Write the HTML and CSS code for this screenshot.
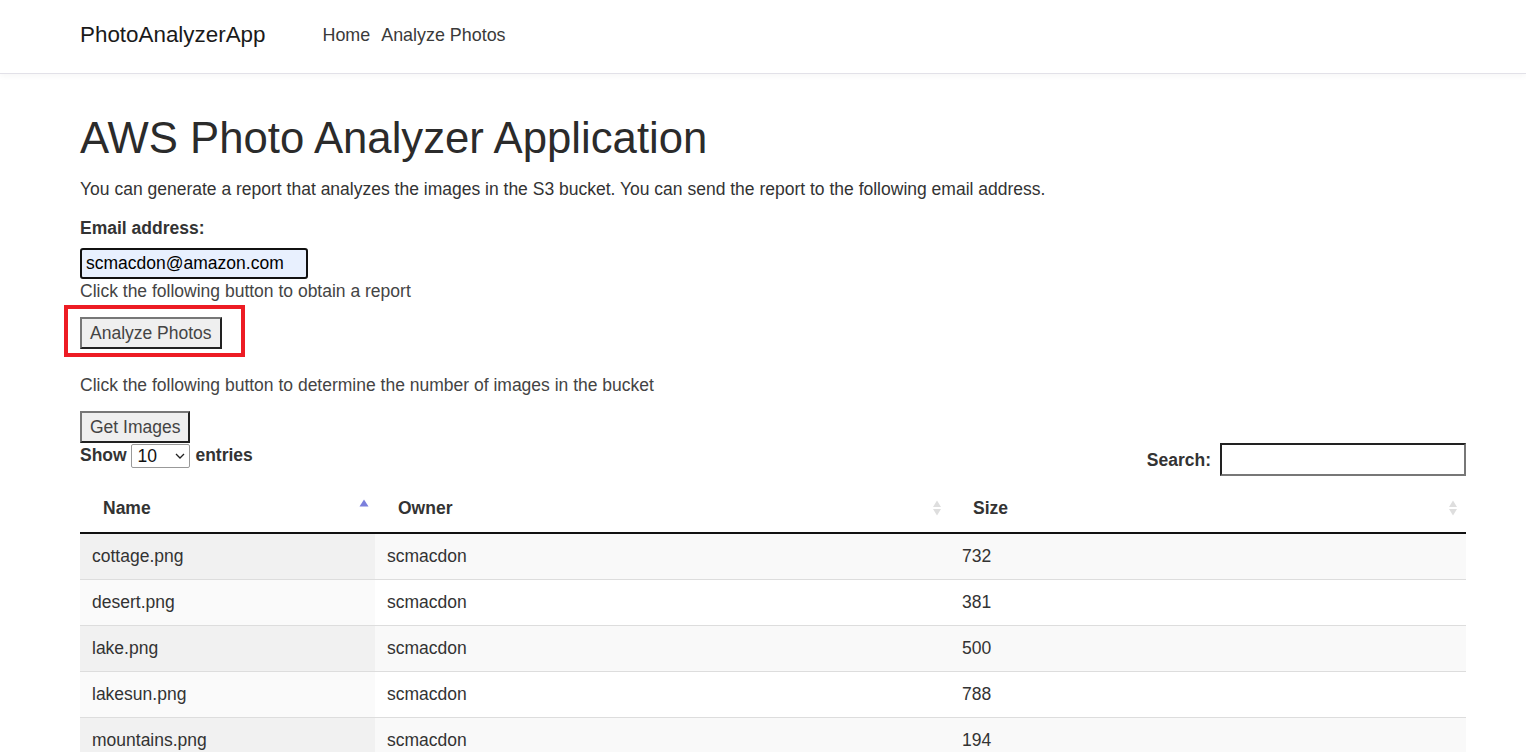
FILE: index.html
```html
<!DOCTYPE html>
<html lang="en">
<head>
<meta charset="utf-8">
<title>AWS Photo Analyzer Application</title>
<link rel="stylesheet" href="styles.css">
</head>
<body>
<header class="navbar">
  <a class="brand" href="#">PhotoAnalyzerApp</a>
  <nav class="nav">
    <a href="#">Home</a>
    <a href="#">Analyze Photos</a>
  </nav>
</header>
<main class="container">
  <h1 class="title">AWS Photo Analyzer Application</h1>
  <p class="lead-text">You can generate a report that analyzes the images in the S3 bucket. You can send the report to the following email address.</p>
  <label class="field-label" for="email">Email address:</label>
  <input class="email-input" id="email" type="text" value="scmacdon@amazon.com">
  <p class="hint">Click the following button to obtain a report</p>
  <div class="btn-wrap">
    <button class="btn">Analyze Photos</button>
    <span class="highlight"></span>
  </div>
  <p class="hint second">Click the following button to determine the number of images in the bucket</p>
  <button class="btn">Get Images</button>
  <div class="dt-controls">
    <div class="dt-length">Show <span class="select">10 <svg width="10" height="6" viewBox="0 0 10 6"><path d="M1 1l4 4 4-4" fill="none" stroke="#222" stroke-width="1.3"/></svg></span> entries</div>
    <div class="dt-search">Search: <input class="search-input" type="text"></div>
  </div>
  <table class="dt">
    <thead>
      <tr>
        <th class="c-name">Name<span class="sort"><svg width="10" height="8" viewBox="0 0 10 8"><path d="M5 0.5L9.5 7.5H0.5z" fill="#7b7fdc"/></svg></span></th>
        <th class="c-owner">Owner<span class="sort"><svg width="10" height="18" viewBox="0 0 10 18"><path d="M5 1.5L9 8H1z" fill="#dedede"/><path d="M5 16.5L9 10H1z" fill="#dedede"/></svg></span></th>
        <th class="c-size">Size<span class="sort"><svg width="10" height="18" viewBox="0 0 10 18"><path d="M5 1.5L9 8H1z" fill="#dedede"/><path d="M5 16.5L9 10H1z" fill="#dedede"/></svg></span></th>
      </tr>
    </thead>
    <tbody>
      <tr><td class="sorted">cottage.png</td><td>scmacdon</td><td>732</td></tr>
      <tr><td class="sorted">desert.png</td><td>scmacdon</td><td>381</td></tr>
      <tr><td class="sorted">lake.png</td><td>scmacdon</td><td>500</td></tr>
      <tr><td class="sorted">lakesun.png</td><td>scmacdon</td><td>788</td></tr>
      <tr><td class="sorted">mountains.png</td><td>scmacdon</td><td>194</td></tr>
    </tbody>
  </table>
</main>
</body>
</html>
```

FILE: styles.css
```css
* { box-sizing: border-box; }
html, body { margin: 0; padding: 0; }
body {
  font-family: "Liberation Sans", Arial, sans-serif;
  font-size: 17.5px;
  line-height: 24px;
  color: #333;
  background: #fff;
}
a { text-decoration: none; }

.navbar {
  height: 74px;
  display: flex;
  align-items: center;
  padding: 0 80px;
  border-bottom: 1px solid #e2e1e8;
  box-shadow: 0 2px 6px rgba(0,0,0,0.04);
}
.brand {
  font-size: 22.4px;
  color: #1a1a1a;
  margin-right: 57px;
  margin-top: -4px;
}
.nav { display: flex; gap: 11px; margin-top: -4px; }
.nav a { color: #3a3a3a; font-size: 17.9px; }

.container {
  width: 1386px;
  margin-left: 80px;
  padding-top: 39px;
}
.title {
  font-size: 43.7px;
  font-weight: 400;
  line-height: 50px;
  margin: 0 0 14px;
  color: #2b2b2b;
}
.lead-text { margin: 0 0 15px; }
.field-label {
  display: block;
  font-weight: 700;
  margin-bottom: 8px;
}
.email-input {
  display: block;
  width: 228px;
  height: 31px;
  border: 2px solid #111;
  border-radius: 3px;
  background: #e8f0fe;
  font-family: "Liberation Sans", Arial, sans-serif;
  font-size: 17.5px;
  color: #000;
  padding: 0 4px;
  margin: 0;
}
.hint { margin: 0 0 14px; color: #444; }
.hint.second { margin: 24px 0 14px; }

.btn-wrap { position: relative; display: inline-block; }
.btn {
  font-family: "Liberation Sans", Arial, sans-serif;
  font-size: 17.5px;
  color: #444;
  background: #efefef;
  border: 2px solid;
  border-color: #777 #222 #222 #777;
  padding: 3px 8px;
  height: 32px;
  line-height: 22px;
  margin: 0;
}
.highlight {
  position: absolute;
  left: -16px;
  top: -12px;
  width: 181px;
  height: 52px;
  border: 4px solid #ed1c24;
  pointer-events: none;
}

.dt-controls {
  display: flex;
  justify-content: space-between;
  align-items: flex-start;
}
.dt-length { font-weight: 700; margin-top: 0; }
.select {
  display: inline-flex;
  align-items: center;
  justify-content: space-between;
  width: 59px;
  height: 24px;
  border: 1px solid #999;
  border-radius: 2px;
  padding: 0 4px 0 6px;
  font-weight: 400;
  color: #111;
  vertical-align: middle;
  margin: 0 1px 0 -1px;
}
.dt-search { font-weight: 700; margin-top: 0; display: flex; align-items: center; gap: 9px; }
.search-input {
  width: 246px;
  height: 33px;
  border: 2px solid;
  border-color: #222 #777 #777 #222;
  margin: 0;
}

.dt {
  width: 1386px;
  border-collapse: collapse;
  margin-top: 8px;
}
.dt th {
  position: relative;
  text-align: left;
  font-weight: 700;
  padding: 12px 18px 12px 23px;
  line-height: 24px;
  border-bottom: 2px solid #111;
}
.c-name { width: 295px; }
.c-owner { width: 575px; }
.sort {
  position: absolute;
  right: 8px;
  top: 50%;
  transform: translateY(-50%);
  display: flex;
}
.c-name .sort { top: 15px; transform: none; right: 6px; }
.dt td {
  padding: 10px 12px 11px;
  line-height: 24px;
  border-top: 1px solid #ddd;
}
.dt tbody tr:first-child td { border-top: none; }
.dt tbody tr:nth-child(odd) td { background: #f9f9f9; }
.dt tbody tr:nth-child(odd) td.sorted { background: #f1f1f1; }
.dt tbody tr:nth-child(even) td { background: #fff; }
.dt tbody tr:nth-child(even) td.sorted { background: #fafafa; }
```
